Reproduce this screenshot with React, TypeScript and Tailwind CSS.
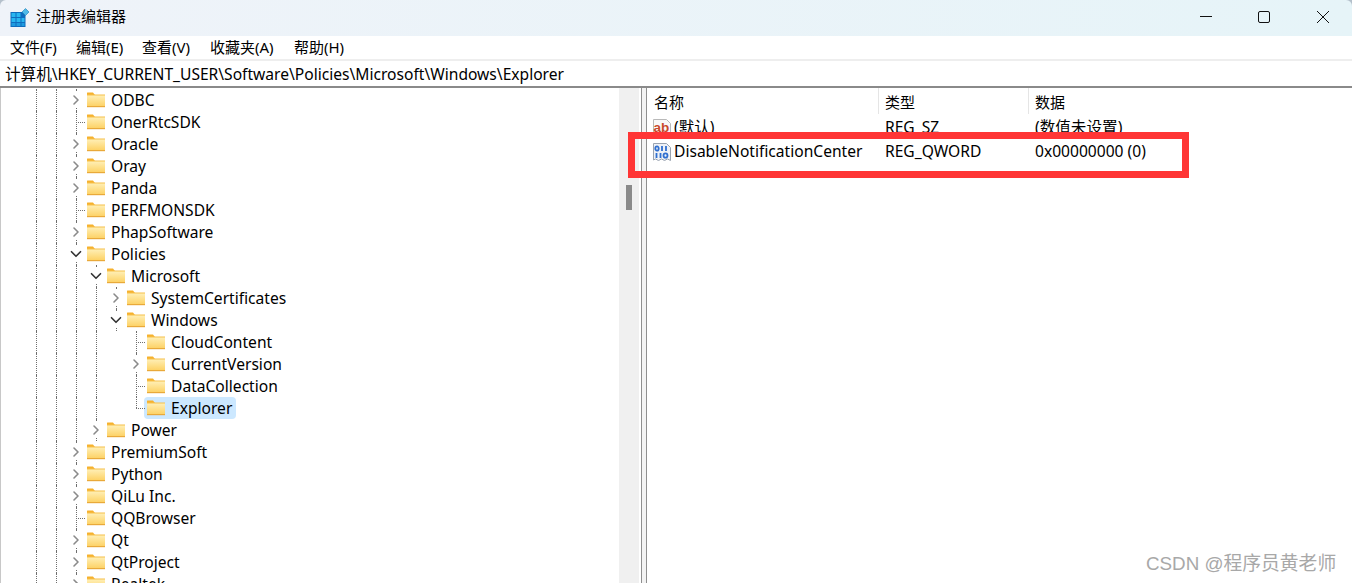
import { ChevronDown, ChevronRight } from "lucide-react";

type CellKind = "blank" | "line" | "right" | "down" | "tee" | "ell";

type TreeNode = {
  name: string;
  cells: CellKind[];
  selected?: boolean;
};

const FONT = "font-['Noto_Sans','Noto_Sans_CJK_SC',sans-serif]";

const nodes: TreeNode[] = [
  { name: "ODBC", cells: ["line", "line", "right"] },
  { name: "OnerRtcSDK", cells: ["line", "line", "tee"] },
  { name: "Oracle", cells: ["line", "line", "right"] },
  { name: "Oray", cells: ["line", "line", "right"] },
  { name: "Panda", cells: ["line", "line", "right"] },
  { name: "PERFMONSDK", cells: ["line", "line", "tee"] },
  { name: "PhapSoftware", cells: ["line", "line", "right"] },
  { name: "Policies", cells: ["line", "line", "down"] },
  { name: "Microsoft", cells: ["line", "line", "line", "down"] },
  { name: "SystemCertificates", cells: ["line", "line", "line", "line", "right"] },
  { name: "Windows", cells: ["line", "line", "line", "line", "down"] },
  { name: "CloudContent", cells: ["line", "line", "line", "line", "blank", "tee"] },
  { name: "CurrentVersion", cells: ["line", "line", "line", "line", "blank", "right"] },
  { name: "DataCollection", cells: ["line", "line", "line", "line", "blank", "tee"] },
  { name: "Explorer", cells: ["line", "line", "line", "line", "blank", "ell"], selected: true },
  { name: "Power", cells: ["line", "line", "line", "right"] },
  { name: "PremiumSoft", cells: ["line", "line", "right"] },
  { name: "Python", cells: ["line", "line", "right"] },
  { name: "QiLu Inc.", cells: ["line", "line", "right"] },
  { name: "QQBrowser", cells: ["line", "line", "tee"] },
  { name: "Qt", cells: ["line", "line", "right"] },
  { name: "QtProject", cells: ["line", "line", "right"] },
  { name: "Realtek", cells: ["line", "line", "right"] },
];

function RegeditLogo() {
  return (
    <svg width="20" height="20" viewBox="0 0 20 20" className="shrink-0">
      <rect x="0.5" y="4" width="15" height="15" fill="#0f6cbd" />
      <path d="M1.5 5h4v4h-4zM6.5 5h4v4h-4zM1.5 10h4v4h-4zM6.5 10h4v4h-4zM11.5 10h3v4h-3z" fill="#29b6f0" />
      <path d="M1.5 15h4v3h-4zM6.5 15h4v3h-4zM11.5 15h3v3h-3z" fill="#1e9be0" />
      <path d="M15.5 0.5l3.5 3.5-3.5 3.5-3.5-3.5z" fill="#4fb9e8" stroke="#1d7fb5" strokeWidth="0.6" />
    </svg>
  );
}

function FolderIcon() {
  return (
    <svg width="20" height="18" viewBox="0 0 20 18" className="shrink-0">
      <defs>
        <linearGradient id="folderBody" x1="0" y1="0" x2="0" y2="1">
          <stop offset="0" stopColor="#fff0b8" />
          <stop offset="1" stopColor="#fdd060" />
        </linearGradient>
      </defs>
      <path d="M1 2C1 1.6 1.4 1.5 2 1.5h5l2 2.5H1z" fill="#f6b12d" />
      <rect x="1" y="4" width="18" height="12" fill="url(#folderBody)" />
      <rect x="1" y="3.5" width="18" height="1" fill="#f5c04a" />
      <rect x="1" y="15" width="18" height="1.2" fill="#e9a93a" />
    </svg>
  );
}

function StringValueIcon() {
  return (
    <svg width="20" height="20" viewBox="0 0 20 20" className="shrink-0">
      <path d="M1.5 1.5h13l4 4v13h-17z" fill="#f8f8f8" stroke="#b9b9b9" />
      <text x="1.5" y="14" fontSize="13.5" fontWeight="700" fill="#c8492b" fontFamily="'Liberation Sans', sans-serif">
        ab
      </text>
    </svg>
  );
}

function BinaryValueIcon() {
  return (
    <svg width="20" height="20" viewBox="0 0 20 20" className="shrink-0">
      <path d="M1.5 1.5h13l4 4v13l-3-1.5-3 1.5-3-1.5-3 1.5-3-1.5-2 1z" fill="#eef1f6" stroke="#9aa3b0" />
      <g fill="none" stroke="#2f6fd0" strokeWidth="1.8">
        <ellipse cx="5" cy="6.5" rx="1.7" ry="2.2" />
        <path d="M10 4v5M14 4v5" />
        <path d="M4.5 11v5M8.5 11v5" />
        <ellipse cx="13.5" cy="13.5" rx="2" ry="2.2" />
      </g>
    </svg>
  );
}

function GuideCell({ kind }: { kind: CellKind }) {
  return (
    <span className="relative h-[22px] w-5 shrink-0">
      {kind !== "blank" && (
        <span
          className={
            kind === "ell"
              ? "absolute top-0 left-2.5 h-[11px] border-l border-dotted border-[#6f6f6f]"
              : "absolute inset-y-0 left-2.5 border-l border-dotted border-[#6f6f6f]"
          }
        />
      )}
      {(kind === "tee" || kind === "ell") && (
        <span className="absolute top-[11px] left-2.5 w-[9px] border-t border-dotted border-[#6f6f6f]" />
      )}
      {kind === "right" && (
        <span className="absolute inset-x-0 inset-y-[3px] flex items-center justify-center bg-white">
          <ChevronRight size={16} strokeWidth={2.4} className="text-[#8a8a8a]" />
        </span>
      )}
      {kind === "down" && (
        <span className="absolute inset-x-0 inset-y-[3px] flex items-center justify-center bg-white">
          <ChevronDown size={18} strokeWidth={2.2} className="text-[#333333]" />
        </span>
      )}
    </span>
  );
}

function TreeRow({ node }: { node: TreeNode }) {
  return (
    <div className="flex h-[22px] items-center">
      {node.cells.map((kind, index) => (
        <GuideCell key={index} kind={kind} />
      ))}
      <div
        className={`flex h-[22px] items-center gap-[5px] rounded-sm pr-1 ${
          node.selected ? "-ml-[2px] bg-[#cce8ff] pl-[2px]" : ""
        }`}
      >
        <FolderIcon />
        <span className="whitespace-nowrap pt-[2px] text-[15.6px] text-black">{node.name}</span>
      </div>
    </div>
  );
}

function WindowControls() {
  return (
    <div className="flex items-center pb-[2px]">
      <svg width="14" height="14" viewBox="0 0 14 14" className="mr-[44px]">
        <path d="M1 6.5h12" stroke="#111" strokeWidth="1" />
      </svg>
      <svg width="14" height="14" viewBox="0 0 14 14" className="mr-[45px]">
        <rect x="1.5" y="1.5" width="11" height="11" rx="1.5" fill="none" stroke="#111" />
      </svg>
      <svg width="14" height="14" viewBox="0 0 14 14" className="mr-[22px]">
        <path d="M1 1l12 12M13 1L1 13" stroke="#111" strokeWidth="1" />
      </svg>
    </div>
  );
}

const menus = [
  { label: "文件(F)", width: "w-[66px]" },
  { label: "编辑(E)", width: "w-[66px]" },
  { label: "查看(V)", width: "w-[68px]" },
  { label: "收藏夹(A)", width: "w-[84px]" },
  { label: "帮助(H)", width: "w-[66px]" },
];

export default function App() {
  return (
    <div className={`relative flex h-[583px] w-[1352px] flex-col overflow-hidden bg-[#b4c0cb] text-black ${FONT}`}>
      <div className="flex h-9 shrink-0 items-center justify-between rounded-t-[6px] bg-gradient-to-r from-[#eff3f9] to-[#e6f4f8] pl-[10px]">
        <div className="flex items-center gap-[6px]">
          <RegeditLogo />
          <span className="pb-[3px] text-[15px]">注册表编辑器</span>
        </div>
        <WindowControls />
      </div>

      <div className="flex h-[23px] shrink-0 items-center bg-white pl-[10px] text-[15px]">
        {menus.map((menu) => (
          <span key={menu.label} className={`whitespace-nowrap ${menu.width}`}>
            {menu.label}
          </span>
        ))}
      </div>

      <div className="flex h-[29px] shrink-0 items-center border-t-2 border-b-2 border-t-[#eeeeee] border-b-[#8a8a8a] bg-white pt-[2px] pl-[5px] text-[15.6px]">
        计算机\HKEY_CURRENT_USER\Software\Policies\Microsoft\Windows\Explorer
      </div>

      <div className="flex min-h-0 flex-1 border-l border-[#c8c8c8] bg-white">
        <div className="w-[618px] shrink-0 overflow-hidden pt-px pl-[25px]">
          {nodes.map((node) => (
            <TreeRow key={node.name} node={node} />
          ))}
        </div>

        <div className="flex w-[20px] shrink-0 justify-center bg-[#f0f0f0] pt-[97px]">
          <div className="h-[25px] w-[6px] bg-[#8a8a8a]" />
        </div>

        <div className="ml-[2px] w-[6px] shrink-0 border-x border-[#8f8f8f] bg-[#f3f3f3]" />

        <div className="min-w-0 flex-1 text-[15.6px]">
          <div className="flex h-[26px] items-center text-[15px]">
            <div className="flex h-full w-[232px] items-center border-r border-[#e5e5e5] pt-[2px] pl-[7px]">名称</div>
            <div className="flex h-full w-[150px] items-center border-r border-[#e5e5e5] pt-[2px] pl-[6px]">类型</div>
            <div className="pt-[2px] pl-[6px]">数据</div>
          </div>
          <div className="flex h-6 items-center pt-[4px]">
            <div className="flex w-[232px] items-center gap-[2px] pl-[5px]">
              <StringValueIcon />
              <span>(默认)</span>
            </div>
            <div className="w-[150px] pl-[6px]">REG_SZ</div>
            <div className="pl-[6px]">(数值未设置)</div>
          </div>
          <div className="flex h-6 items-center pt-[4px]">
            <div className="flex w-[232px] items-center gap-[2px] pl-[5px]">
              <BinaryValueIcon />
              <span>DisableNotificationCenter</span>
            </div>
            <div className="w-[150px] pl-[6px]">REG_QWORD</div>
            <div className="pl-[6px]">0x00000000 (0)</div>
          </div>
        </div>
      </div>

      <div className="pointer-events-none absolute top-[132px] left-[628px] h-[46px] w-[561px] border-[7px] border-[#ff3535]" />
      <div className="pointer-events-none absolute top-[550px] left-[1146px] font-['Liberation_Sans','Noto_Sans_CJK_SC',sans-serif] text-[18.8px] whitespace-nowrap text-[#a8a8a8]">
        CSDN @程序员黄老师
      </div>
    </div>
  );
}
